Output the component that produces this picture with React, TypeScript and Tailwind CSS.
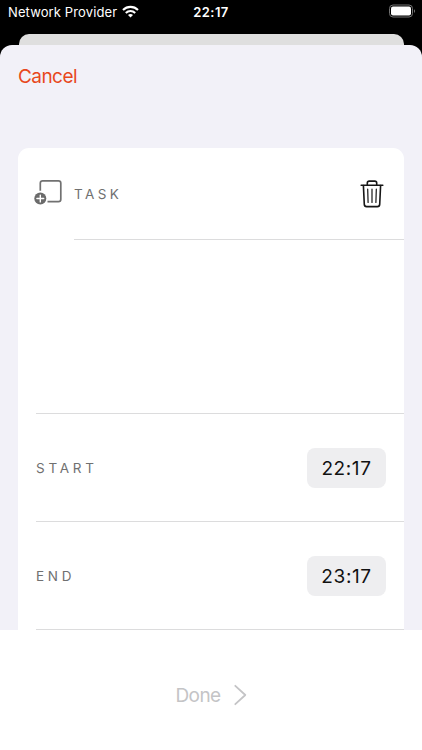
import React from 'react';

function StatusBar() {
  return (
    <div className="grid h-[34px] grid-cols-[1fr_auto_1fr] items-start text-white">
      <div className="flex items-center gap-[5px] pt-[3px] pl-[8px]">
        <span className="text-[13px] leading-[18px] tracking-[0.12px] whitespace-nowrap">Network Provider</span>
        <svg className="h-[13px] w-[17px] -translate-y-px" viewBox="0 0 17 13" fill="none" stroke="currentColor" strokeWidth="2.1">
          <path d="M1 4.9C5.2 .8 11.8 .8 16 4.9" />
          <path d="M3.8 7.9C6.5 5.3 10.5 5.3 13.2 7.9" />
          <path d="M8.5 12.4L6 9.9C7.4 8.6 9.6 8.6 11 9.9Z" fill="currentColor" stroke="none" />
        </svg>
      </div>
      <span className="pt-[3px] text-[13px] leading-[18px] font-semibold tracking-[0.45px]">22:17</span>
      <div className="flex justify-end pt-[4px] pr-[6px]">
        <svg className="h-[14px] w-[28px]" viewBox="0 0 28 14">
          <rect x="1.5" y="1" width="23" height="12" rx="3.5" fill="none" stroke="#737373" />
          <rect x="3" y="2.5" width="20" height="9" rx="2" fill="white" />
          <path d="M26 5.2C27.4 5.7 27.4 8.3 26 8.8Z" fill="#737373" />
        </svg>
      </div>
    </div>
  );
}

function AddTaskIcon() {
  return (
    <svg className="h-[28px] w-[28px]" viewBox="0 0 28 28" fill="none">
      <path d="M6.3 10.8V3.2Q6.3 .9 8.7 .9H24.4Q26.8 .9 26.8 3.2V19.3Q26.8 21.7 24.4 21.7H13.5" stroke="#717171" strokeWidth="1.7" />
      <circle cx="6.3" cy="18.5" r="6" fill="#6b6b6b" />
      <path d="M6.3 15.1V21.9M2.9 18.5H9.7" stroke="white" strokeWidth="1.4" strokeLinecap="round" />
    </svg>
  );
}

function TrashIcon() {
  return (
    <svg className="mt-px h-[28px] w-[24px]" viewBox="0 0 24 28" fill="none" stroke="#161616" strokeWidth="1.6" strokeLinecap="round">
      <path d="M1.2 5.3H22.8" />
      <path d="M7.3 5.1V3Q7.3 1.1 9.2 1.1H14.8Q16.7 1.1 16.7 3V5.1" />
      <path d="M3.4 5.5L4.3 24.4Q4.4 26.6 6.6 26.6H17.4Q19.6 26.6 19.7 24.4L20.6 5.5" />
      <path d="M7.7 9.2L8.1 22.5M12 9.2V22.5M16.3 9.2L15.9 22.5" strokeWidth="1.2" />
    </svg>
  );
}

function TimeRow({ label, time }: { label: string; time: string }) {
  return (
    <div className="ml-[18px] flex h-[108px] items-center justify-between border-b border-[#dcdcdd] pr-[18px]">
      <span className="pt-[2px] text-[13.5px] tracking-[3.75px] text-[#707070]">{label}</span>
      <button className="h-[40px] w-[79px] rounded-[8px] bg-[#eeeef0] pt-[3px] text-[19px] tracking-[0.6px] text-[#111111]">
        {time}
      </button>
    </div>
  );
}

export default function App() {
  return (
    <div className="flex h-[750px] w-[422px] flex-col overflow-hidden bg-black font-[Inter,sans-serif]">
      <StatusBar />
      <div className="mr-[18px] ml-[19px] h-[11px] shrink-0 rounded-t-[10px] bg-[#dfdfdf]" />
      <main className="flex min-h-0 flex-1 flex-col rounded-t-[12px] bg-[#f2f1f8]">
        <header className="h-[103px] shrink-0 pt-[18px] pl-[18px]">
          <button className="block text-[19px] leading-[28px] tracking-[-0.55px] text-[#e8481c]">Cancel</button>
        </header>
        <section className="mx-[18px] h-[482px] shrink-0 rounded-t-[11px] bg-white">
          <div className="flex h-[92px] pl-[16px]">
            <div className="flex w-[40px] shrink-0 items-center">
              <AddTaskIcon />
            </div>
            <div className="flex flex-1 items-center justify-between border-b border-[#dcdcdd] pr-[20px]">
              <span className="pt-[2px] text-[13.5px] tracking-[3.4px] text-[#707070]">TASK</span>
              <button>
                <TrashIcon />
              </button>
            </div>
          </div>
          <div className="ml-[18px] h-[174px] border-b border-[#dcdcdd]" />
          <TimeRow label="START" time="22:17" />
          <TimeRow label="END" time="23:17" />
        </section>
        <footer className="flex h-[120px] shrink-0 items-center justify-center bg-white pt-[10px]">
          <button className="flex items-center gap-[13px] text-[19px] tracking-[-0.6px] text-[#c4c4c6]">
            <span className="pt-[2px]">Done</span>
            <svg className="h-[22px] w-[13px]" viewBox="0 0 13 22" fill="none" stroke="currentColor" strokeWidth="1.8" strokeLinecap="round" strokeLinejoin="round">
              <path d="M1.3 1.8L11.3 11L1.3 20.2" />
            </svg>
          </button>
        </footer>
      </main>
    </div>
  );
}
